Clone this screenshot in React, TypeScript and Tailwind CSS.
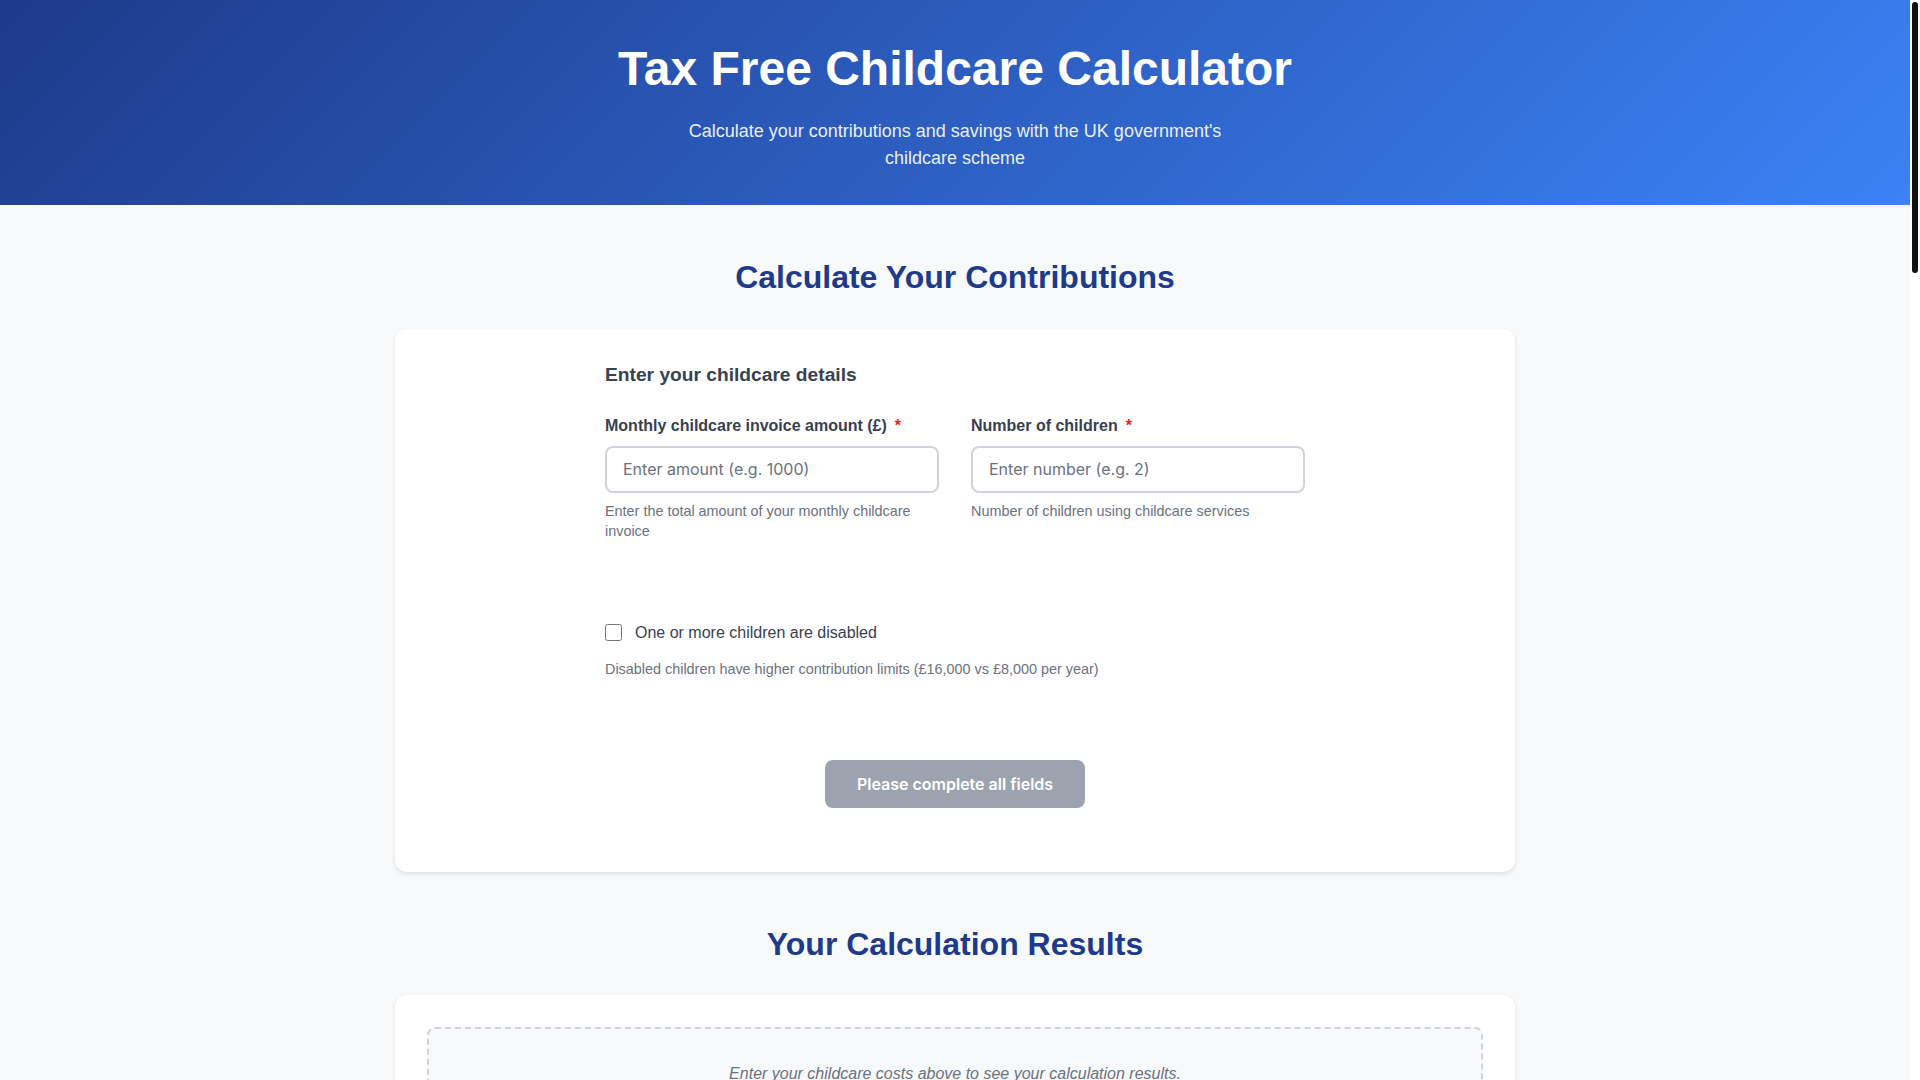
import { useState } from 'react'

const fieldInput =
  "w-full rounded-lg border-2 border-[#d1d5db] bg-white px-4 py-3 font-['Inter',sans-serif] text-base leading-[19px] text-[#374151] outline-none placeholder:text-[#6b7280] focus:border-[#3b82f6]"

function Field({
  label,
  placeholder,
  help,
  value,
  onChange,
}: {
  label: string
  placeholder: string
  help: string
  value: string
  onChange: (v: string) => void
}) {
  return (
    <div>
      <label className="mb-2 block text-base font-semibold leading-6 text-[#374151]">
        {label}
        <span className="ml-2 text-[#dc2626]">*</span>
      </label>
      <input
        type="text"
        inputMode="decimal"
        className={fieldInput}
        placeholder={placeholder}
        value={value}
        onChange={(e) => onChange(e.target.value)}
      />
      <p className="mt-2 text-[14.4px] leading-5 text-[#6b7280]">{help}</p>
    </div>
  )
}

export default function App() {
  const [amount, setAmount] = useState('')
  const [children, setChildren] = useState('')
  const [disabled, setDisabled] = useState(false)
  // scroll indicator on the right rail
  const [thumb, setThumb] = useState({ top: 0, size: 271 })

  const ready = amount !== '' && children !== ''

  const onScroll = (e: React.UIEvent<HTMLDivElement>) => {
    const el = e.currentTarget
    const track = el.clientHeight - 4
    const size = Math.max(24, (el.clientHeight / el.scrollHeight) * track)
    const top = (el.scrollTop / (el.scrollHeight - el.clientHeight || 1)) * (track - size)
    setThumb({ top, size })
  }

  return (
    <div className="flex h-screen bg-white">
      <div
        onScroll={onScroll}
        className="flex-1 overflow-y-auto [scrollbar-width:none] [&::-webkit-scrollbar]:hidden"
      >
        <div className="min-h-[4272px] bg-[#f8f9fa] font-['Liberation_Sans',Arial,sans-serif] text-[#374151]">
          <header className="bg-[linear-gradient(135deg,#1e3a8a_0%,#3b82f6_100%)] pt-10 pb-8 text-center text-white">
            <h1 className="text-[48px] font-bold leading-[1.2]">Tax Free Childcare Calculator</h1>
            <p className="mx-auto mt-5 max-w-[560px] text-[18px] leading-[1.55] opacity-90">
              Calculate your contributions and savings with the UK government's childcare scheme
            </p>
          </header>

          <main className="mx-auto w-[1120px]">
            <section className="pt-[53px]">
              <h2 className="mb-8 text-center text-[32px] font-bold leading-[1.2] text-[#1e3a8a]">
                Calculate Your Contributions
              </h2>
              <div className="rounded-xl bg-white p-8 shadow-[0_2px_4px_rgba(0,0,0,0.1)]">
                <div className="mx-auto max-w-[700px] pb-8">
                  <h3 className="text-[19.2px] font-bold leading-[1.5] text-[#374151]">
                    Enter your childcare details
                  </h3>

                  <div className="mt-6 grid grid-cols-2 gap-8">
                    <Field
                      label="Monthly childcare invoice amount (£)"
                      placeholder="Enter amount (e.g. 1000)"
                      help="Enter the total amount of your monthly childcare invoice"
                      value={amount}
                      onChange={setAmount}
                    />
                    <Field
                      label="Number of children"
                      placeholder="Enter number (e.g. 2)"
                      help="Number of children using childcare services"
                      value={children}
                      onChange={setChildren}
                    />
                  </div>

                  <label className="mt-20 flex items-center text-base leading-6 text-[#374151]">
                    <input
                      type="checkbox"
                      className="m-0 mr-[13px] h-[17px] w-[17px]"
                      checked={disabled}
                      onChange={(e) => setDisabled(e.target.checked)}
                    />
                    One or more children are disabled
                  </label>
                  <p className="mt-[14px] text-[14.4px] leading-5 text-[#6b7280]">
                    Disabled children have higher contribution limits (£16,000 vs £8,000 per year)
                  </p>

                  <div className="mt-[81px] flex justify-center">
                    <button
                      type="button"
                      disabled={!ready}
                      className={
                        ready
                          ? "rounded-lg bg-[#1e3a8a] px-8 py-[14px] font-['Inter',sans-serif] text-base font-semibold leading-5 text-white"
                          : "cursor-not-allowed rounded-lg bg-[#9ca3af] px-8 py-[14px] font-['Inter',sans-serif] text-base font-semibold leading-5 text-white"
                      }
                    >
                      {ready ? 'Calculate' : 'Please complete all fields'}
                    </button>
                  </div>
                </div>
              </div>
            </section>

            <section className="pt-[53px] pb-16">
              <h2 className="mb-8 text-center text-[32px] font-bold leading-[1.2] text-[#1e3a8a]">
                Your Calculation Results
              </h2>
              <div className="rounded-xl bg-white p-8 shadow-[0_2px_4px_rgba(0,0,0,0.1)]">
                <div className="rounded-lg border-2 border-dashed border-[#d1d5db] bg-[#f8f9fa] px-8 py-8 text-center">
                  <p className="text-base italic leading-[1.6] text-[#6b7280]">
                    Enter your childcare costs above to see your calculation results.
                  </p>
                </div>
              </div>
            </section>
          </main>
        </div>
      </div>

      {/* scroll rail */}
      <div className="flex w-[10px] shrink-0 justify-center bg-white pt-[2px]">
        <div
          className="w-[6px] rounded-full bg-[#111111]"
          style={{ marginTop: thumb.top, height: thumb.size }}
        />
      </div>
    </div>
  )
}
